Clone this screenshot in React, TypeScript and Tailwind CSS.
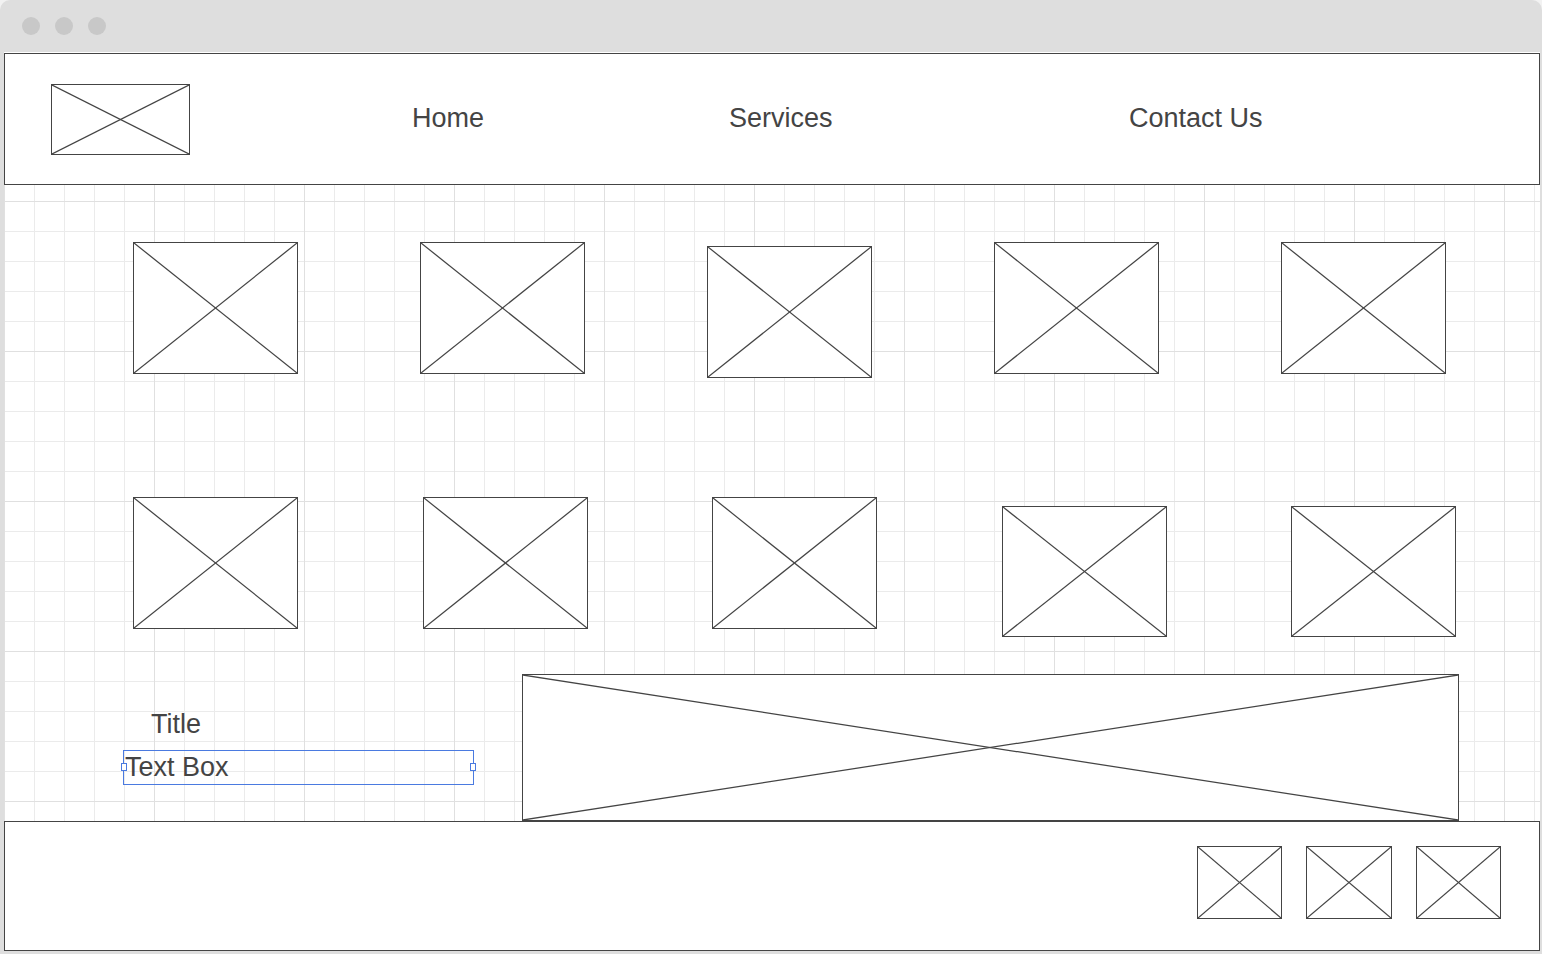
import React from 'react'

// wireframe placeholder: a box with an X across it
const Placeholder = ({ className }: { className: string }) => (
  <div className={`border border-[#444] bg-white shrink-0 ${className}`}>
    <svg viewBox="0 0 100 100" preserveAspectRatio="none" className="block w-full h-full">
      <line x1="0" y1="0" x2="100" y2="100" stroke="#444" strokeWidth="1.25" vectorEffect="non-scaling-stroke" />
      <line x1="100" y1="0" x2="0" y2="100" stroke="#444" strokeWidth="1.25" vectorEffect="non-scaling-stroke" />
    </svg>
  </div>
)

const App = () => {
  return (
    <div className="w-[1542px] h-[954px] bg-[#f2f2f2] font-['Liberation_Sans',Arial,sans-serif] text-[#444] overflow-hidden">
      <div className="w-full h-full bg-[#dedede] rounded-t-[10px] flex flex-col">
        {/* window chrome */}
        <div className="h-[52px] flex items-center gap-[15px] pl-[22px] shrink-0">
          <span className="w-[18px] h-[18px] rounded-full bg-[#c8c8c8]" />
          <span className="w-[18px] h-[18px] rounded-full bg-[#c8c8c8]" />
          <span className="w-[18px] h-[18px] rounded-full bg-[#c8c8c8]" />
        </div>

        <div className="ml-[4px] w-[1536px] bg-white pt-[1px] flex flex-col">
          {/* header */}
          <div className="h-[132px] border border-[#444] flex items-center pl-[46px] text-[27px]">
            <Placeholder className="w-[139px] h-[71px]" />
            <div className="ml-[222px] mb-[2px] w-[317px]">Home</div>
            <div className="mb-[2px] w-[400px]">Services</div>
            <div className="mb-[2px]">Contact Us</div>
          </div>

          {/* canvas */}
          <div className="h-[636px] flex flex-col bg-white [background-image:linear-gradient(to_right,#e0e0e0_1px,transparent_1px),linear-gradient(to_bottom,#e0e0e0_1px,transparent_1px),linear-gradient(to_right,#ebebeb_1px,transparent_1px),linear-gradient(to_bottom,#ebebeb_1px,transparent_1px)] [background-size:150px_150px,150px_150px,30px_30px,30px_30px] [background-position:0_16px,0_16px,0_16px,0_16px]">
            <div className="mt-[57px] h-[136px] pl-[129px] flex items-start gap-[122px]">
              <Placeholder className="w-[165px] h-[132px]" />
              <Placeholder className="w-[165px] h-[132px]" />
              <Placeholder className="w-[165px] h-[132px] mt-[4px]" />
              <Placeholder className="w-[165px] h-[132px]" />
              <Placeholder className="w-[165px] h-[132px]" />
            </div>

            <div className="mt-[119px] h-[141px] pl-[129px] flex items-start">
              <Placeholder className="w-[165px] h-[132px]" />
              <Placeholder className="w-[165px] h-[132px] ml-[125px]" />
              <Placeholder className="w-[165px] h-[132px] ml-[124px]" />
              <Placeholder className="w-[165px] h-[131px] ml-[125px] mt-[9px]" />
              <Placeholder className="w-[165px] h-[131px] ml-[124px] mt-[9px]" />
            </div>

            <div className="mt-[36px] pl-[119px] flex items-start">
              <div className="w-[351px] pt-[35px] flex flex-col text-[27px]">
                <div className="pl-[28px] leading-[30px]">Title</div>
                <div className="relative mt-[11px] h-[35px] border border-[#4a7ae0] leading-[33px] pl-[1px]">
                  Text Box
                  <span className="absolute left-[-3px] top-[12px] w-[6px] h-[8px] border border-[#4a7ae0] bg-white" />
                  <span className="absolute right-[-3px] top-[12px] w-[6px] h-[8px] border border-[#4a7ae0] bg-white" />
                </div>
              </div>
              <Placeholder className="ml-[48px] w-[937px] h-[147px]" />
            </div>
          </div>

          {/* footer */}
          <div className="h-[130px] border border-[#444] flex justify-end items-start pt-[24px] pr-[38px] gap-[24px]">
            <Placeholder className="w-[85px] h-[73px]" />
            <Placeholder className="w-[86px] h-[73px]" />
            <Placeholder className="w-[85px] h-[73px]" />
          </div>
        </div>
      </div>
    </div>
  )
}

export default App
